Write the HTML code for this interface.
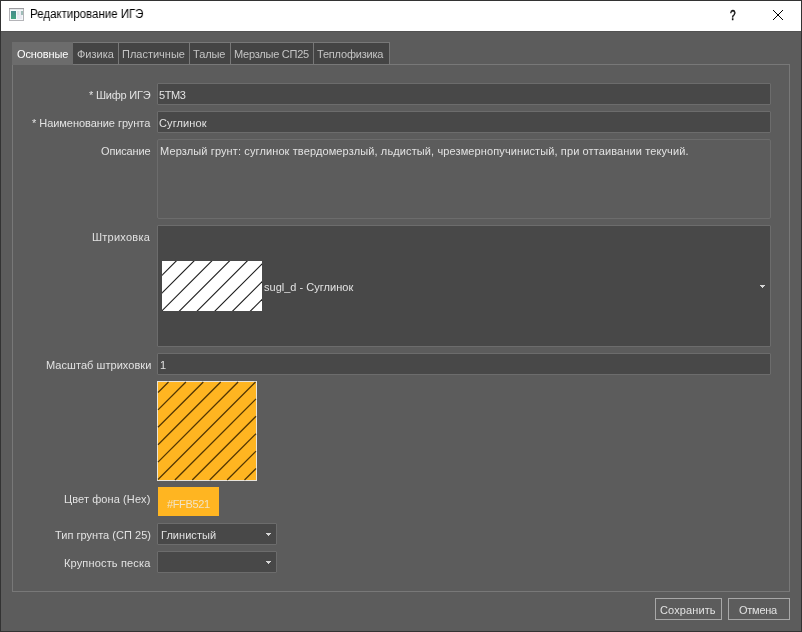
<!DOCTYPE html>
<html lang="ru">
<head>
<meta charset="utf-8">
<title>Редактирование ИГЭ</title>
<style>
*{box-sizing:border-box;margin:0;padding:0}
html,body{width:802px;height:632px;overflow:hidden;background:#5c5c5c}
body{position:relative;font-family:"Liberation Sans","DejaVu Sans",sans-serif;font-size:11px;color:#dcdcdc}
.abs{position:absolute}
.t{position:absolute;white-space:nowrap;line-height:13px;height:13px;will-change:transform;transform-origin:0 0}
#frame{left:0;top:0;width:802px;height:632px;border:1px solid #333;pointer-events:none;z-index:10}
#titlebar{left:1px;top:1px;width:800px;height:30px;background:#fff;color:#000}
.tab{top:43px;height:21px;background:#444;border-right:1px solid #787878;color:#c8c8c8;line-height:22px;text-align:center;white-space:nowrap}
.tab.sel{top:42px;height:23px;background:#6c6c6c;border-right:none;color:#fff;line-height:24px}
#tabline{left:73px;top:42px;width:317px;height:1px;background:#787878}
#tbshadow{left:1px;top:31px;width:800px;height:1px;background:#525252}
#pane{left:12px;top:64px;width:778px;height:528px;border:1px solid #787878}
.inp{left:157px;width:614px;height:22px;background:#484848;border:1px solid #6c6c6c;border-radius:1px;line-height:22px;padding-left:2px;white-space:nowrap}
.btn{top:598px;height:22px;border:1px solid #a8a8a8;background:#5c5c5c;line-height:22px;text-align:center}
</style>
</head>
<body>
<div id="titlebar" class="abs">
  <svg class="abs" style="left:8px;top:7px" width="15" height="13" viewBox="0 0 15 13">
    <rect x="0" y="0" width="15" height="13" fill="#b4b4b8"/>
    <rect x="0" y="0" width="15" height="1" fill="#9c9ca0"/>
    <rect x="1" y="1" width="13" height="11" fill="#f6f9fa"/>
    <rect x="1" y="1" width="13" height="1" fill="#e4e8ea"/>
    <defs><linearGradient id="gg" x1="0" y1="0" x2="0" y2="1"><stop offset="0" stop-color="#46898c"/><stop offset="1" stop-color="#45a582"/></linearGradient></defs>
    <rect x="2" y="3" width="5" height="8" fill="url(#gg)"/>
    <rect x="8" y="3" width="5" height="8" fill="#ebebf3"/>
    <rect x="8" y="3" width="2" height="4" fill="#dfe6e6"/>
    <rect x="12" y="3" width="2" height="4" fill="#9fbdb8"/>
  </svg>
    <span class="t" id="q" style="left:729px;top:6px;height:16px;line-height:16px;font-size:14px;color:#000;-webkit-text-stroke:0.45px #000;transform:scaleX(0.72)">?</span>
  <svg class="abs" style="left:771px;top:8px" width="12" height="12" viewBox="0 0 12 12"><path d="M1 1 L11 11 M11 1 L1 11" stroke="#000" stroke-width="1" fill="none"/></svg>
</div>

<div id="tbshadow" class="abs"></div>
<div id="tabline" class="abs"></div>
<div class="abs tab" style="left:73px;width:46px"></div>
<div class="abs tab" style="left:119px;width:71px"></div>
<div class="abs tab" style="left:190px;width:41px"></div>
<div class="abs tab" style="left:231px;width:83px"></div>
<div class="abs tab" style="left:314px;width:76px"></div>

<div id="pane" class="abs"></div>
<div class="abs tab sel" style="left:12px;width:61px"></div>

<div class="abs inp" style="top:83px"></div>

<div class="abs inp" style="top:111px"></div>

<div class="abs inp" style="top:139px;height:80px;background:#5c5c5c;border-color:#6c6c6c;border-radius:2px;padding-left:4px;line-height:24px"></div>

<div class="abs inp" style="top:225px;height:122px"></div>
<svg class="abs" style="left:162px;top:261px" width="100" height="50" viewBox="0 0 100 50">
  <rect width="100" height="50" fill="#fff"/>
  <g stroke="#1c1c1c" stroke-width="1.1" fill="none"><path d="M-1.00 15.20 L15.20 -1.00"/><path d="M-1.00 32.95 L32.95 -1.00"/><path d="M-1.00 50.70 L50.70 -1.00"/><path d="M16.45 51.00 L68.45 -1.00"/><path d="M34.20 51.00 L86.20 -1.00"/><path d="M51.95 51.00 L101.00 1.95"/><path d="M69.70 51.00 L101.00 19.70"/><path d="M87.45 51.00 L101.00 37.45"/></g>
</svg>
<svg class="abs" style="left:760px;top:285px" width="5" height="3" viewBox="0 0 5 3" shape-rendering="crispEdges"><path d="M0 0h5v1h-1v1h-1v1h-1v-1h-1v-1h-1z" fill="#d6d6d6"/></svg>

<div class="abs inp" style="top:353px"></div>

<svg class="abs" style="left:157px;top:381px" width="100" height="100" viewBox="0 0 100 100">
  <rect x="0.5" y="0.5" width="99" height="99" fill="#FFB521" stroke="#e8e4dc"/>
  <g stroke="#523603" stroke-width="1.3" fill="none"><path d="M1.00 11.50 L11.50 1.00"/><path d="M1.00 28.90 L28.90 1.00"/><path d="M1.00 46.30 L46.30 1.00"/><path d="M1.00 63.70 L63.70 1.00"/><path d="M1.00 81.10 L81.10 1.00"/><path d="M1.00 98.50 L98.50 1.00"/><path d="M17.90 99.00 L99.00 17.90"/><path d="M35.30 99.00 L99.00 35.30"/><path d="M52.70 99.00 L99.00 52.70"/><path d="M70.10 99.00 L99.00 70.10"/><path d="M87.50 99.00 L99.00 87.50"/></g>
</svg>

<div class="abs" style="left:157.75px;top:487.4px;width:60.75px;height:28.7px;background:#FFB521;color:#f3e4c4;text-align:center;line-height:29px"></div>

<div class="abs inp" style="top:523px;width:120px"></div>
<svg class="abs" style="left:266px;top:533px" width="5" height="3" viewBox="0 0 5 3" shape-rendering="crispEdges"><path d="M0 0h5v1h-1v1h-1v1h-1v-1h-1v-1h-1z" fill="#d6d6d6"/></svg>

<div class="abs inp" style="top:551px;width:120px"></div>
<svg class="abs" style="left:266px;top:561px" width="5" height="3" viewBox="0 0 5 3" shape-rendering="crispEdges"><path d="M0 0h5v1h-1v1h-1v1h-1v-1h-1v-1h-1z" fill="#d6d6d6"/></svg>

<div class="abs btn" style="left:655px;width:67px"></div>
<div class="abs btn" style="left:728px;width:62px"></div>

<span class="t" id="title" style="left:29.60px;top:8px;color:#000;font-size:12px;letter-spacing:0.000px;transform:scaleX(0.958)">Редактирование ИГЭ</span>
<span class="t" id="tab1" style="left:16.64px;top:48px;color:#fff;font-size:11px;letter-spacing:-0.124px">Основные</span>
<span class="t" id="tab2" style="left:76.82px;top:48px;color:#c4c4c4;font-size:11px;letter-spacing:0.009px">Физика</span>
<span class="t" id="tab3" style="left:121.84px;top:48px;color:#c4c4c4;font-size:11px;letter-spacing:-0.005px">Пластичные</span>
<span class="t" id="tab4" style="left:193.20px;top:48px;color:#c4c4c4;font-size:11px;letter-spacing:-0.092px">Талые</span>
<span class="t" id="tab5" style="left:233.64px;top:48px;color:#c4c4c4;font-size:11px;letter-spacing:-0.245px">Мерзлые СП25</span>
<span class="t" id="tab6" style="left:317.47px;top:48px;color:#c4c4c4;font-size:11px;letter-spacing:-0.192px">Теплофизика</span>
<span class="t" id="lbl1" style="left:88.95px;top:89px;color:#e2e2e2;font-size:11px;letter-spacing:-0.220px">* Шифр ИГЭ</span>
<span class="t" id="lbl2" style="left:31.96px;top:117px;color:#e2e2e2;font-size:11px;letter-spacing:-0.048px">* Наименование грунта</span>
<span class="t" id="lbl3" style="left:100.60px;top:145px;color:#e2e2e2;font-size:11px;letter-spacing:-0.140px">Описание</span>
<span class="t" id="lbl4" style="left:92.09px;top:231px;color:#e2e2e2;font-size:11px;letter-spacing:0.238px">Штриховка</span>
<span class="t" id="lbl5" style="left:45.89px;top:359px;color:#e2e2e2;font-size:11px;letter-spacing:0.050px">Масштаб штриховки</span>
<span class="t" id="lbl6" style="left:64.36px;top:493px;color:#e2e2e2;font-size:11px;letter-spacing:0.096px">Цвет фона (Hex)</span>
<span class="t" id="lbl7" style="left:55.20px;top:529px;color:#e2e2e2;font-size:11px;letter-spacing:0.026px">Тип грунта (СП 25)</span>
<span class="t" id="lbl8" style="left:64.16px;top:557px;color:#e2e2e2;font-size:11px;letter-spacing:0.156px">Крупность песка</span>
<span class="t" id="in1" style="left:159.10px;top:89px;color:#e2e2e2;font-size:11px;letter-spacing:-0.420px">5ТМ3</span>
<span class="t" id="in2" style="left:159.10px;top:117px;color:#e2e2e2;font-size:11px;letter-spacing:0.096px">Суглинок</span>
<span class="t" id="ta" style="left:160.34px;top:145px;color:#e2e2e2;font-size:11px;letter-spacing:0.114px">Мерзлый грунт: суглинок твердомерзлый, льдистый, чрезмернопучинистый, при оттаивании текучий.</span>
<span class="t" id="combo" style="left:264.13px;top:281px;color:#e2e2e2;font-size:11px;letter-spacing:0.014px">sugl_d - Суглинок</span>
<span class="t" id="scale" style="left:160.44px;top:359px;color:#e2e2e2;font-size:11px;letter-spacing:0.000px">1</span>
<span class="t" id="hex" style="left:166.50px;top:498px;color:#f3e4c4;font-size:11px;letter-spacing:-0.366px">#FFB521</span>
<span class="t" id="c1" style="left:160.64px;top:529px;color:#e2e2e2;font-size:11px;letter-spacing:0.049px">Глинистый</span>
<span class="t" id="b1" style="left:659.88px;top:604px;color:#e2e2e2;font-size:11px;letter-spacing:0.107px">Сохранить</span>
<span class="t" id="b2" style="left:738.88px;top:604px;color:#e2e2e2;font-size:11px;letter-spacing:-0.252px">Отмена</span>
<div id="frame" class="abs"></div>
</body>
</html>
